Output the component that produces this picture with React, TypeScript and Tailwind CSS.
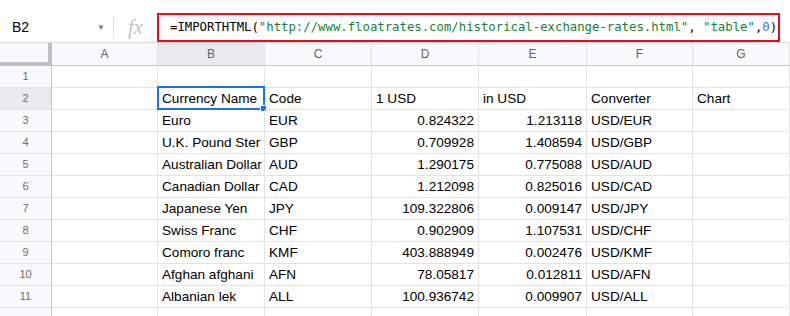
import React from "react";

const cols = ["A", "B", "C", "D", "E", "F", "G"];

const rows: string[][] = [
  [],
  ["Currency Name", "Code", "1 USD", "in USD", "Converter", "Chart"],
  ["Euro", "EUR", "0.824322", "1.213118", "USD/EUR"],
  ["U.K. Pound Ster", "GBP", "0.709928", "1.408594", "USD/GBP"],
  ["Australian Dollar", "AUD", "1.290175", "0.775088", "USD/AUD"],
  ["Canadian Dollar", "CAD", "1.212098", "0.825016", "USD/CAD"],
  ["Japanese Yen", "JPY", "109.322806", "0.009147", "USD/JPY"],
  ["Swiss Franc", "CHF", "0.902909", "1.107531", "USD/CHF"],
  ["Comoro franc", "KMF", "403.888949", "0.002476", "USD/KMF"],
  ["Afghan afghani", "AFN", "78.05817", "0.012811", "USD/AFN"],
  ["Albanian lek", "ALL", "100.936742", "0.009907", "USD/ALL"],
  [],
];

function Cell({ text, right, selected }: { text?: string; right?: boolean; selected?: boolean }) {
  return (
    <div className="relative h-[22px] border-r border-b border-[#e2e3e3]">
      <div
        className={`h-full overflow-hidden flex items-end pb-[2px] px-[4px] text-[13.6px] leading-[17px] text-[#000] whitespace-nowrap ${
          right ? "justify-end" : "justify-start"
        }`}
      >
        {text}
      </div>
      {selected && (
        <>
          <div className="absolute -left-px -top-[2px] -right-px -bottom-px border-2 border-[#1a73e8]" />
          <div className="absolute -right-[3px] -bottom-[3px] w-[7px] h-[7px] bg-[#1a73e8] border border-white" />
        </>
      )}
    </div>
  );
}

export default function App() {
  return (
    <div className="w-[790px] h-[316px] overflow-hidden bg-white font-['Liberation_Sans',Arial,sans-serif]">
      {/* formula bar */}
      <div className="h-[42px] pt-[13px] flex items-stretch">
        <div className="w-[113px] flex items-center pl-[12px] pr-[8px] text-[14px] text-[#000]">
          <span className="flex-1">B2</span>
          <span className="text-[8px] text-[#777]">▼</span>
        </div>
        <div className="w-px my-[4px] bg-[#e0e0e0]" />
        <div className="w-[43px] flex items-center justify-center text-[21px] italic text-[#c4c4c4] font-['Liberation_Serif',serif]">
          fx
        </div>
        <div className="w-[623px] border-2 border-[#e10d1d] flex items-center pl-[11px] font-['DejaVu_Sans_Mono',monospace] text-[12.3px] whitespace-nowrap text-[#000]">
          =IMPORTHTML(
          <span className="text-[#188038]">"http://www.floatrates.com/historical-exchange-rates.html"</span>
          ,&nbsp;<span className="text-[#188038]">"table"</span>,<span className="text-[#3d6bce]">0</span>)
        </div>
      </div>

      {/* grid */}
      <div className="grid grid-cols-[52px_106px_107px_107px_107px_108px_106px_97px] border-t border-[#dadce0]">
        <div className="h-[23px] bg-[#f8f9fa] border-r-[4px] border-b-[4px] border-[#c0c0c0]" />
        {cols.map((c) => (
          <div
            key={c}
            className={`h-[23px] border-r border-b border-[#c7c7c7] flex items-center justify-center text-[12px] text-[#5f6368] ${
              c === "B" ? "bg-[#e8eaed]" : "bg-[#f8f9fa]"
            } border-r-[#e2e3e3]`}
          >
            {c}
          </div>
        ))}

        {rows.map((r, i) => (
          <React.Fragment key={i}>
            <div
              className={`h-[22px] border-r border-b border-[#c7c7c7] border-b-[#e2e3e3] flex items-center justify-center text-[11px] text-[#6d6d6d] ${
                i === 1 ? "bg-[#e8eaed]" : "bg-[#f8f9fa]"
              }`}
            >
              {i < 11 ? i + 1 : ""}
            </div>
            <Cell />
            {[0, 1, 2, 3, 4, 5].map((j) => (
              <Cell
                key={j}
                text={r[j]}
                right={i > 1 && (j === 2 || j === 3)}
                selected={i === 1 && j === 0}
              />
            ))}
          </React.Fragment>
        ))}
      </div>
    </div>
  );
}
